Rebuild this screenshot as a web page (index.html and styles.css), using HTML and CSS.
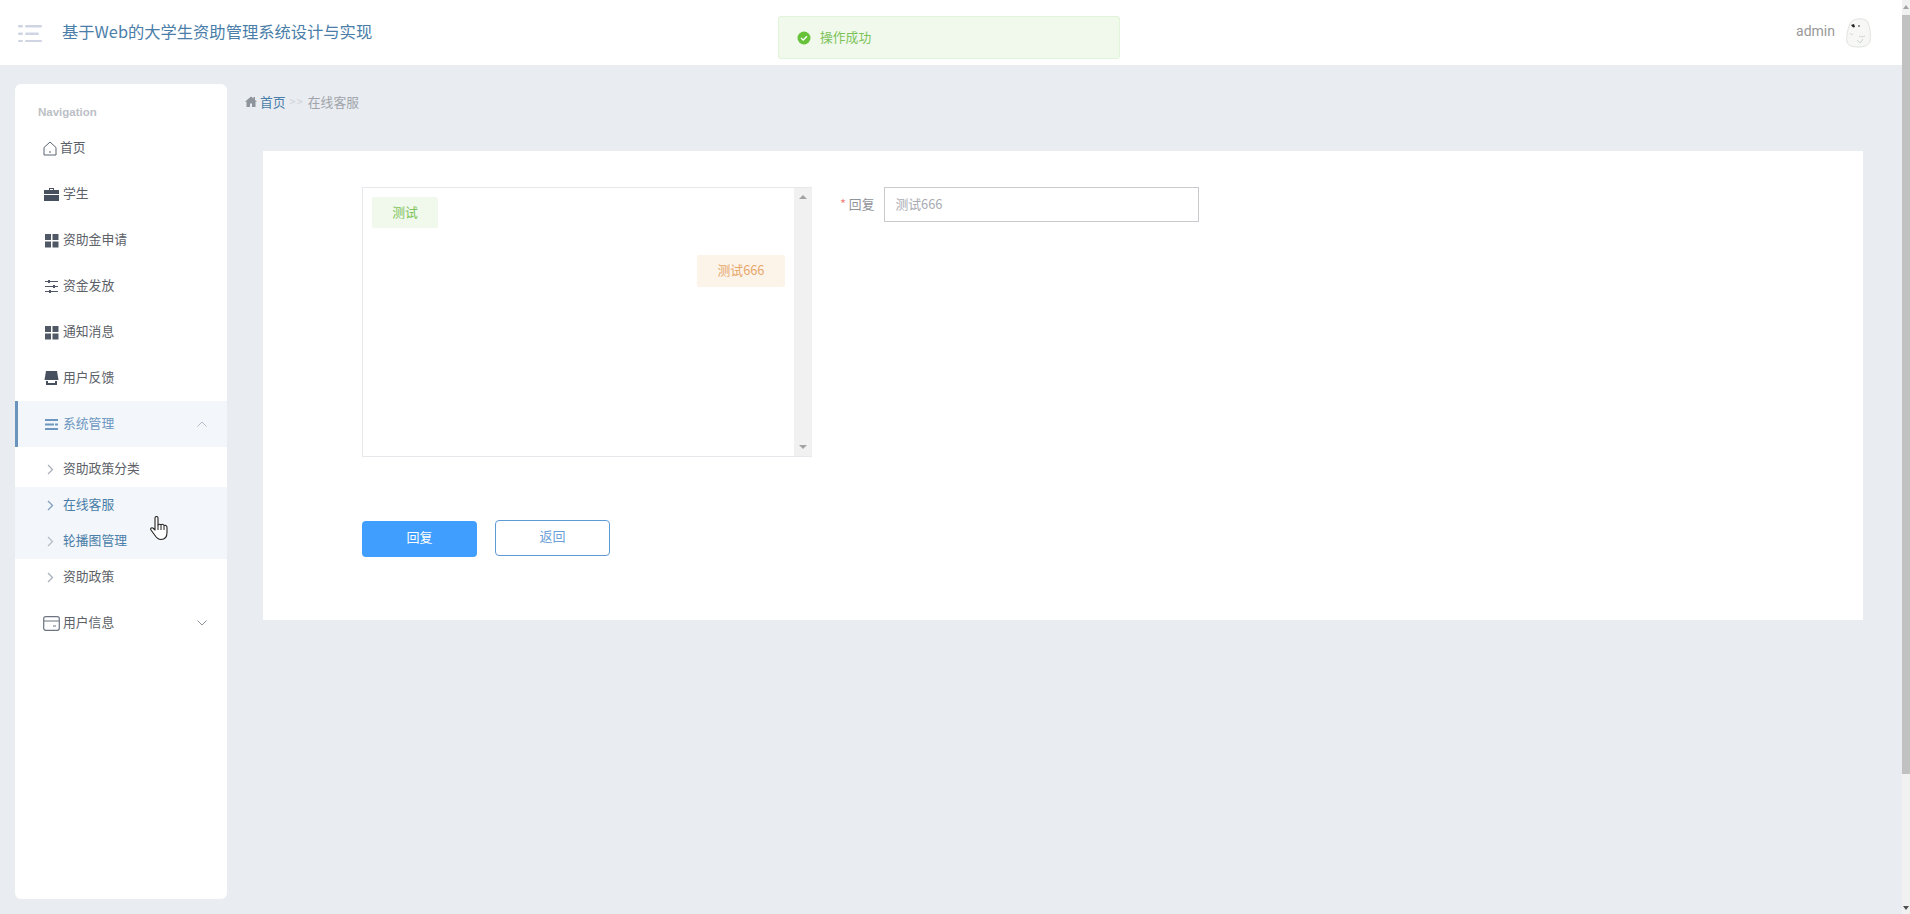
FILE: index.html
```html
<!DOCTYPE html>
<html lang="zh-CN">
<head>
    <meta charset="UTF-8">
    <meta name="viewport" content="width=device-width, initial-scale=1.0">
    <title>在线客服</title>
    <link rel="stylesheet" href="styles.css">
</head>
<body>
    <div class="app">
        <header class="topbar">
            <svg class="menu-icon" width="24" height="18" viewBox="0 0 24 18">
                <g fill="#cfd5e2">
                    <rect x="0" y="1" width="5" height="2.500" rx="1.200"/><rect x="7" y="1" width="17" height="2.500" rx="1.200"/>
                    <rect x="0" y="8.500" width="5" height="2.500" rx="1.200"/><rect x="7" y="8.500" width="14" height="2.500" rx="1.200"/>
                    <rect x="0" y="16" width="5" height="2" rx="1"/><rect x="7" y="16" width="17" height="2" rx="1"/>
                </g>
            </svg>
            <div class="site-title">基于Web的大学生资助管理系统设计与实现</div>
            <div class="user">
                <span class="user-name">admin</span>
                <svg class="avatar" width="26" height="30" viewBox="0 0 26 30">
                    <path d="M5 4C8 0 18 0 21 3c3 4 4 15 3 20-1 4-5 6-11 6-6 0-11-1-12-5C0 19 2 8 5 4z" fill="#f7f8f5" stroke="#dfe3df" stroke-width="1"/>
                    <path d="M5 7l3-1 1 3-2 .5z" fill="#222"/>
                    <circle cx="13" cy="8" r="1" fill="#777"/>
                    <path d="M4 15c1 2 2 2 3 1M11 22l3 3 3-4M13 18c2 1 4 1 6 0" fill="none" stroke="#cfd3cc" stroke-width="1"/>
                </svg>
            </div>
        </header>

        <div class="layout">
            <nav class="sidebar">
                <div class="nav-label">Navigation</div>

                <a class="nav-item nav-home">
                    <svg class="nav-icon" width="14" height="15" viewBox="0 0 14 15"><path d="M1 6.500 7 1l6 5.500V14H1zM6 11h2" fill="none" stroke="#5a6472" stroke-width="1"/></svg>
                    <span>首页</span>
                </a>
                <a class="nav-item">
                    <svg class="nav-icon" width="15" height="15" viewBox="0 0 15 15"><path d="M5 3V1h5v2h5v4H0V3zM6 3h3V2H6zM0 8h15v6H0z" fill="#46505e" fill-rule="evenodd"/></svg>
                    <span>学生</span>
                </a>
                <a class="nav-item">
                    <svg class="nav-icon" width="15" height="15" viewBox="0 0 15 15"><path d="M1 1h6v6H1zM8.500 1h6v6h-6zM1 8.500h6v6H1zM8.500 8.500h6v6h-6z" fill="#505866"/></svg>
                    <span>资助金申请</span>
                </a>
                <a class="nav-item">
                    <svg class="nav-icon" width="15" height="15" viewBox="0 0 15 15">
                        <path d="M1 2.500h13M1 7.500h13M1 12.500h13" stroke="#505866" stroke-width="1"/>
                        <path d="M4 1h2v3H4zM9 6h2v3H9zM5 11h2v3H5z" fill="#505866"/>
                    </svg>
                    <span>资金发放</span>
                </a>
                <a class="nav-item">
                    <svg class="nav-icon" width="15" height="15" viewBox="0 0 15 15"><path d="M1 1h6v6H1zM8.500 1h6v6h-6zM1 8.500h6v6H1zM8.500 8.500h6v6h-6z" fill="#505866"/></svg>
                    <span>通知消息</span>
                </a>
                <a class="nav-item">
                    <svg class="nav-icon" width="15" height="15" viewBox="0 0 15 15"><path d="M2 0h11l1.500 9H.5z" fill="#46505e"/><path d="M2 10h2v2h7v-2h2v4H2z" fill="#46505e"/></svg>
                    <span>用户反馈</span>
                </a>

                <a class="nav-item is-open">
                    <svg class="nav-icon" width="15" height="15" viewBox="0 0 15 15"><path d="M1 2h13v2H1zM1 6.500h9v2H1zM11 6.500h3v2h-3zM1 11h13v2H1z" fill="#6d97c1"/></svg>
                    <span>系统管理</span>
                    <svg class="nav-arrow" width="10" height="6" viewBox="0 0 10 6"><path d="M.5 5.500 5 1l4.500 4.500" fill="none" stroke="#b4bcc8" stroke-width="1"/></svg>
                </a>
                <div class="sub-list">
                    <a class="sub-item">
                        <svg class="sub-arrow" width="7" height="11" viewBox="0 0 7 11"><path d="m1 1 4.500 4.500L1 10" fill="none" stroke="#a9b0ba" stroke-width="1.300"/></svg>
                        <span>资助政策分类</span>
                    </a>
                    <a class="sub-item is-active">
                        <svg class="sub-arrow" width="7" height="11" viewBox="0 0 7 11"><path d="m1 1 4.500 4.500L1 10" fill="none" stroke="#7f9fc0" stroke-width="1.300"/></svg>
                        <span>在线客服</span>
                    </a>
                    <a class="sub-item is-hover">
                        <svg class="sub-arrow" width="7" height="11" viewBox="0 0 7 11"><path d="m1 1 4.500 4.500L1 10" fill="none" stroke="#b4bcc6" stroke-width="1.300"/></svg>
                        <span>轮播图管理</span>
                    </a>
                    <a class="sub-item">
                        <svg class="sub-arrow" width="7" height="11" viewBox="0 0 7 11"><path d="m1 1 4.500 4.500L1 10" fill="none" stroke="#a9b0ba" stroke-width="1.300"/></svg>
                        <span>资助政策</span>
                    </a>
                </div>

                <a class="nav-item nav-wide">
                    <svg class="nav-icon" width="17" height="15" viewBox="0 0 17 15"><rect x=".7" y=".7" width="15.600" height="13.600" rx="2" fill="none" stroke="#6b7480" stroke-width="1.200"/><path d="M1 5h15M10 10h3" stroke="#6b7480" stroke-width="1.200"/></svg>
                    <span>用户信息</span>
                    <svg class="nav-arrow" width="10" height="6" viewBox="0 0 10 6"><path d="m.5.5 4.500 4.500L9.500.5" fill="none" stroke="#8a929e" stroke-width="1"/></svg>
                </a>
            </nav>

            <main class="main">
                <div class="breadcrumb">
                    <svg class="crumb-home" width="12" height="11" viewBox="0 0 12 11"><path d="M6 .5 0 5.800h1.500V11H5V7.500h2V11h3.500V5.800H12L10 4V1H8.500v1.600z" fill="#8e949c"/></svg>
                    <span class="crumb-link">首页</span>
                    <span class="crumb-sep">&gt;&gt;</span>
                    <span class="crumb-current">在线客服</span>
                </div>

                <section class="card">
                    <div class="form-row">
                        <div class="chat-box">
                            <div class="chat-list">
                                <div class="bubble bubble-in">测试</div>
                                <div class="bubble bubble-out">测试666</div>
                            </div>
                            <div class="chat-scroll">
                                <span class="tri tri-up"></span>
                                <span class="tri tri-down"></span>
                            </div>
                        </div>
                        <div class="field">
                            <label class="field-label"><span class="required">*</span> 回复</label>
                            <div class="field-input">测试666</div>
                        </div>
                    </div>
                    <div class="actions">
                        <button class="btn btn-primary">回复</button>
                        <button class="btn btn-plain">返回</button>
                    </div>
                </section>
            </main>
        </div>
    </div>

    <div class="page-scroll">
        <span class="tri tri-up tri-page"></span>
        <div class="page-thumb"></div>
        <span class="tri tri-down tri-page-down"></span>
    </div>

    <div class="toast">
        <svg width="14" height="14" viewBox="0 0 14 14"><circle cx="7" cy="7" r="6.500" fill="#67c23a"/><path d="m4 7 2.200 2L10 5.300" fill="none" stroke="#fff" stroke-width="1.300"/></svg>
        <span>操作成功</span>
    </div>

    <svg class="cursor" width="20" height="25" viewBox="0 0 20 25">
        <path d="M5 2c0-2 3-2 3 0v7c1-1 2-1 3 0 1-1 2-1 3 .5 1-.5 3 0 3 2v5c0 4-2 7-6 7-3 0-4-1-6-4L1 14c-1-2 1-3 2.500-1.500L5 14z" fill="#fff" stroke="#222" stroke-width="1.100" stroke-linejoin="round"/>
        <path d="M8 9v5M11 9.500V14M14 10v4" stroke="#222" stroke-width="1"/>
    </svg>
</body>
</html>
```

FILE: styles.css
```css
* {
    box-sizing: border-box;
}

html, body {
    margin: 0;
    height: 914px;
    overflow: hidden;
}

body {
    display: flex;
    position: relative;
    font-family: "Noto Sans CJK SC", "Liberation Sans", sans-serif;
    font-size: 12.800px;
    background-color: #e9ecf1;
    color: #606266;
}

a {
    text-decoration: none;
}

.app {
    flex: 1;
    min-width: 0;
}

/* top bar */
.topbar {
    display: flex;
    align-items: center;
    height: 65px;
    padding: 0 30px 0 18px;
    background-color: #ffffff;
}

.site-title {
    margin-left: 20px;
    padding-bottom: 3px;
    font-size: 16.300px;
    color: #4a7ea8;
}

.user {
    display: flex;
    align-items: center;
    gap: 11px;
    margin-left: auto;
}

.user-name {
    padding-bottom: 3px;
    font-family: Roboto, sans-serif;
    font-size: 14px;
    color: #999999;
}

/* sidebar */
.layout {
    display: flex;
    align-items: flex-start;
}

.sidebar {
    flex: none;
    width: 212px;
    height: 815px;
    margin: 19px 0 0 15px;
    padding-top: 18px;
    background-color: #ffffff;
    border-radius: 6px;
}

.nav-label {
    height: 23px;
    padding-left: 23px;
    font-family: "Liberation Sans", sans-serif;
    font-size: 11.500px;
    font-weight: bold;
    line-height: 20px;
    color: #bcc0c6;
}

.nav-item {
    display: flex;
    align-items: center;
    height: 46px;
    padding: 0 20px 0 29px;
    color: #5c6168;
}

.nav-item span,
.sub-item span {
    padding-bottom: 3px;
}

.nav-icon {
    flex: none;
    margin-right: 4px;
}

.nav-home .nav-icon {
    margin-left: -1px;
    margin-right: 3px;
}

.nav-wide .nav-icon {
    margin-left: -1px;
    margin-right: 3px;
}

.nav-arrow {
    margin-left: auto;
}

.nav-item.is-open {
    padding-left: 26px;
    background-color: #f3f6fa;
    border-left: 3px solid #6a94bc;
    color: #6d97c1;
}

.sub-list {
    padding: 4px 0 5px;
}

.sub-item {
    display: flex;
    align-items: center;
    height: 36px;
    padding-left: 32px;
    color: #5c6168;
}

.sub-arrow {
    margin-right: 9px;
}

.sub-item.is-active,
.sub-item.is-hover {
    background-color: #f3f6fa;
    color: #4a7ea8;
}

/* main */
.main {
    flex: 1;
    min-width: 0;
    padding: 26px 39px 0 18px;
}

.breadcrumb {
    display: flex;
    align-items: center;
    gap: 4px;
    height: 20px;
    color: #a0a4aa;
}

.crumb-home {
    margin-right: -1px;
}

.crumb-sep {
    font-size: 11px;
    letter-spacing: 1px;
    color: #ced2d8;
}

.crumb-link {
    color: #4a7ea8;
}

.card {
    height: 469px;
    margin: 40px 0 0 18px;
    padding: 36px 99px;
    background-color: #ffffff;
}

.form-row {
    display: flex;
    align-items: flex-start;
    gap: 28px;
}

.chat-box {
    display: flex;
    flex: none;
    width: 450px;
    height: 270px;
    border: 1px solid #e6e8eb;
    border-right: none;
}

.chat-list {
    flex: 1;
    display: flex;
    flex-direction: column;
    align-items: flex-start;
    gap: 27px;
    padding: 9px 9px 0;
}

.bubble {
    display: flex;
    align-items: center;
    justify-content: center;
    height: 31px;
    padding-bottom: 3px;
    border-radius: 2px;
}

.bubble-in {
    width: 66px;
    background-color: #f0f9eb;
    color: #7cc35a;
}

.bubble-out {
    align-self: flex-end;
    width: 88px;
    height: 32px;
    background-color: #fdf4e9;
    color: #e6a66a;
}

.chat-scroll {
    display: flex;
    flex: none;
    flex-direction: column;
    align-items: center;
    justify-content: space-between;
    width: 18px;
    padding: 7px 0;
    background-color: #f1f1f1;
}

.tri {
    display: block;
    width: 0;
    height: 0;
    border-left: 4px solid transparent;
    border-right: 4px solid transparent;
}

.tri-up {
    border-bottom: 4px solid #a3a3a3;
}

.tri-down {
    border-top: 4px solid #a3a3a3;
}

.field {
    display: flex;
    align-items: center;
    gap: 10px;
}

.field-label {
    padding-bottom: 2px;
    color: #909399;
}

.required {
    color: #f08080;
}

.field-input {
    display: flex;
    align-items: center;
    width: 315px;
    height: 35px;
    padding-left: 10px;
    padding-bottom: 3px;
    border: 1px solid #c8cacd;
    color: #a8abb2;
}

.actions {
    display: flex;
    align-items: flex-start;
    gap: 18px;
    margin-top: 64px;
}

.btn {
    width: 115px;
    height: 36px;
    padding: 0 0 5px;
    border-radius: 4px;
    font-family: inherit;
    font-size: 13px;
    cursor: pointer;
}

.btn-primary {
    border: none;
    background-color: #409eff;
    color: #ffffff;
}

.btn-plain {
    margin-top: -1px;
    border: 1px solid #5e9bd6;
    background-color: #ffffff;
    color: #6a9fd8;
}

/* page scrollbar, drawn because the screenshot has one */
.page-scroll {
    position: relative;
    flex: none;
    width: 8px;
    height: 914px;
    padding-top: 15px;
    background-color: #f1f1f1;
}

.page-thumb {
    height: 759px;
    background-color: #c1c1c1;
}

.tri-page {
    position: absolute;
    top: 5px;
    left: 1px;
    border-left-width: 3px;
    border-right-width: 3px;
}

.tri-page-down {
    position: absolute;
    bottom: 4px;
    left: 1px;
    border-left-width: 3px;
    border-right-width: 3px;
    border-top-color: #505050;
}

/* overlays */
.toast {
    position: absolute;
    top: 16px;
    left: 778px;
    display: flex;
    align-items: center;
    gap: 9px;
    width: 342px;
    height: 43px;
    padding: 0 0 0 18px;
    background-color: #f0f9eb;
    border: 1px solid #e1f3d8;
    border-radius: 3px;
    color: #7cc35a;
}

.toast span {
    padding-bottom: 3px;
}

.cursor {
    position: absolute;
    top: 516px;
    left: 150px;
}
```
